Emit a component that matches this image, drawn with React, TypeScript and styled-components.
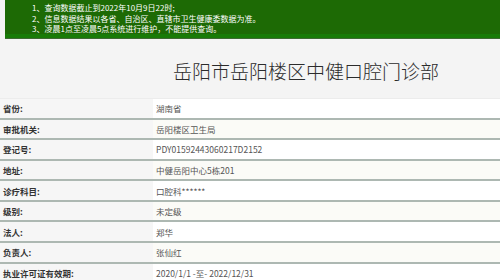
import styled, { createGlobalStyle } from "styled-components";

const GlobalStyle = createGlobalStyle`
    html, body {
        margin: 0;
        padding: 0;
        background: #f4f4f4;
        font-family: "Noto Sans CJK SC", "Noto Sans", sans-serif;
        overflow: hidden;
    }
`;

const notices = [
    "1、查询数据截止到2022年10月9日22时;",
    "2、信息数据结果以各省、自治区、直辖市卫生健康委数据为准。",
    "3、凌晨1点至凌晨5点系统进行维护，不能提供查询。",
];

const rows: [string, string][] = [
    ["省份:", "湖南省"],
    ["审批机关:", "岳阳楼区卫生局"],
    ["登记号:", "PDY01592443060217D2152"],
    ["地址:", "中健岳阳中心5栋201"],
    ["诊疗科目:", "口腔科******"],
    ["级别:", "未定级"],
    ["法人:", "郑华"],
    ["负责人:", "张仙红"],
    ["执业许可证有效期:", "2020/1/1 -至- 2022/12/31"],
];

const App = () => {
    return (
        <Page>
            <GlobalStyle />
            <Notice>
                {notices.map((text, index) => (
                    <NoticeLine key={index}>{text}</NoticeLine>
                ))}
            </Notice>
            <TitleBar>
                <Title>岳阳市岳阳楼区中健口腔门诊部</Title>
            </TitleBar>
            <Table>
                {rows.map(([label, value], index) => (
                    <Row key={index} $striped={index % 2 === 1}>
                        <Label>{label}</Label>
                        <Value>{value}</Value>
                    </Row>
                ))}
            </Table>
        </Page>
    );
};

export default App;

const Page = styled.div`
    width: 500px;
    height: 280px;
    background: #f4f4f4;
    overflow: hidden;
`;

const Notice = styled.div`
    margin-left: 5px;
    height: 38px;
    box-sizing: border-box;
    padding: 3px 0 0 27px;
    background: #1d6a05;
    border-bottom: 4px solid #187b07;
    box-shadow: 0 1px 0 #3f6a33;
`;

const NoticeLine = styled.div`
    color: #ffffff;
    font-size: 8px;
    line-height: 10.5px;
    white-space: nowrap;
`;

const TitleBar = styled.div`
    height: 61px;
    box-sizing: border-box;
    padding: 4px 0 0 173px;
    display: flex;
    align-items: center;
    border-bottom: 1px solid #ececec;
`;

const Title = styled.h1`
    margin: 0;
    font-size: 19px;
    font-weight: 300;
    color: #2b2b2b;
    letter-spacing: 0;
    white-space: nowrap;
`;

const Table = styled.div`
    display: flex;
    flex-direction: column;
`;

const Row = styled.div<{ $striped: boolean }>`
    display: grid;
    grid-template-columns: 153px 1fr;
    height: 20.57px;
    box-sizing: border-box;
    border-bottom: 2px solid #adb8b2;
    background: ${(p) => (p.$striped ? "#fbfbf7" : "#ffffff")};
    align-items: center;
`;

const Label = styled.div`
    padding-left: 3px;
    height: 100%;
    display: flex;
    align-items: center;
    background: #f6f6f6;
    font-size: 8.5px;
    font-weight: 700;
    color: #333;
    white-space: nowrap;
`;

const Value = styled.div`
    padding-left: 3px;
    font-size: 8.5px;
    color: #555;
    white-space: nowrap;
`;
